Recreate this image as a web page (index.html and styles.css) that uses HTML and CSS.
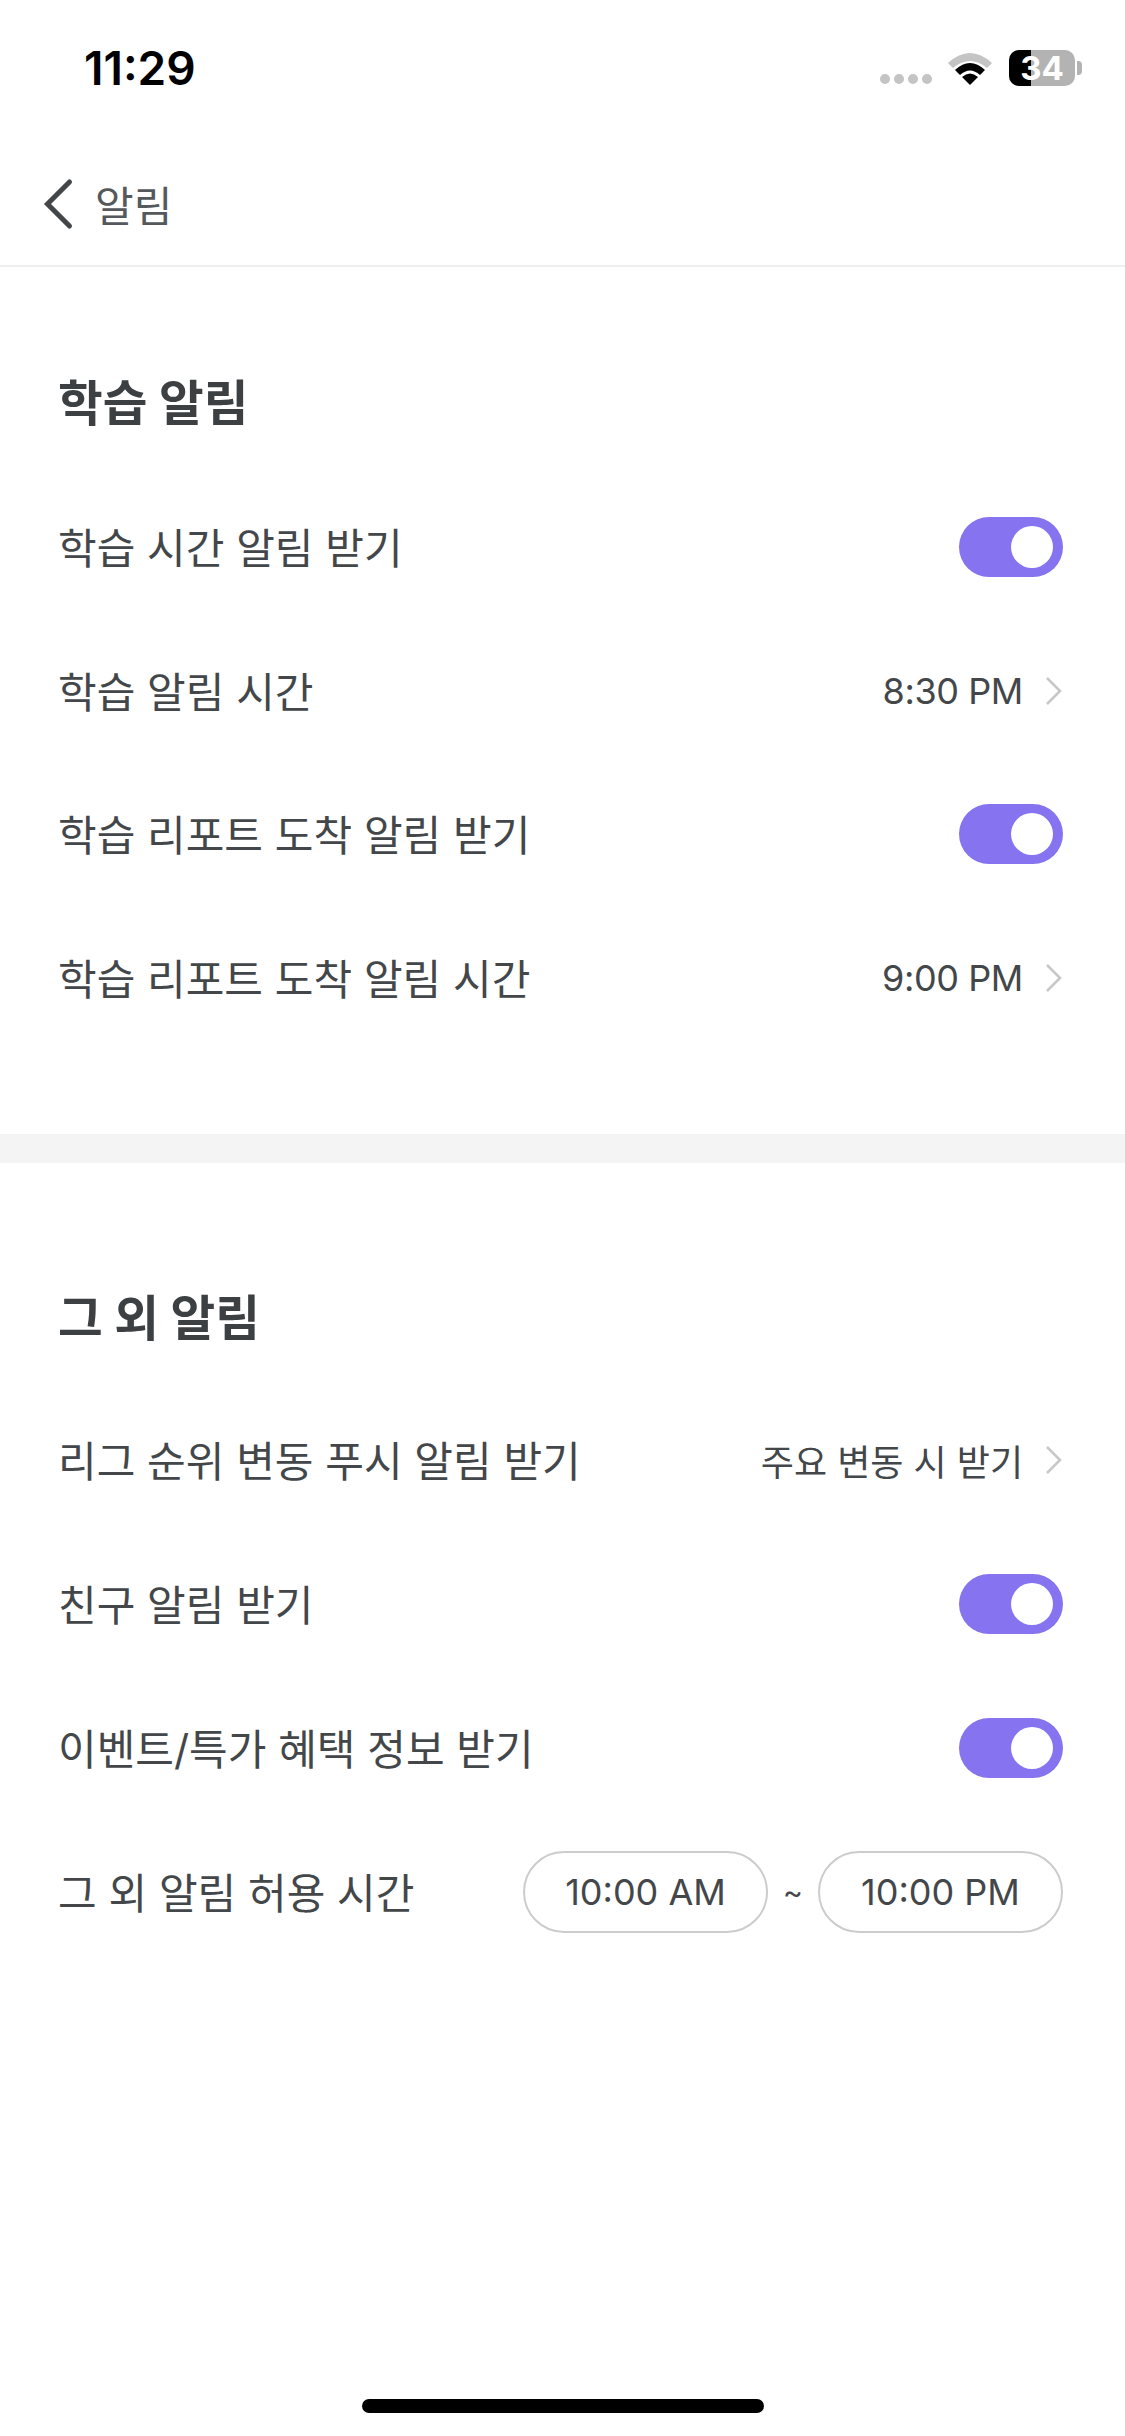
FILE: index.html
```html
<!DOCTYPE html>
<html lang="ko">
<head>
    <meta charset="UTF-8">
    <meta name="viewport" content="width=device-width, initial-scale=1.0">
    <title>알림</title>
    <link rel="stylesheet" href="styles.css">
</head>
<body>
<div class="page">
    <div class="status-bar">
        <span class="clock">11:29</span>
        <div class="status-icons">
            <div class="signal"><i></i><i></i><i></i><i></i></div>
            <svg class="wifi" width="46" height="34" viewBox="0 0 46 34">
                <path d="M1 12 Q23 -8 45 12 L40 17 Q23 3 6 17 Z" fill="#c4c4c4"/>
                <path d="M8 19 Q23 5 38 19 L33 24 Q23 15 13 24 Z" fill="#000"/>
                <path d="M15 26 Q23 19 31 26 L23 34 Z" fill="#000"/>
            </svg>
            <div class="battery">
                <div class="battery-body"><span class="battery-level"></span><span class="battery-text">34</span></div>
                <span class="battery-cap"></span>
            </div>
        </div>
    </div>

    <header class="nav">
        <svg class="back" width="34" height="54" viewBox="0 0 34 54">
            <path d="M27.5 5 L5.5 27 L27.5 49" fill="none" stroke="#43474a" stroke-width="5" stroke-linecap="round"/>
        </svg>
        <h1>알림</h1>
    </header>

    <section class="group first">
        <h2>학습 알림</h2>
        <div class="row"><span class="label">학습 시간 알림 받기</span><span class="toggle"></span></div>
        <div class="row">
            <span class="label">학습 알림 시간</span>
            <span class="value time">8:30 PM<svg class="chev" width="18" height="30" viewBox="0 0 18 30"><path d="M2 2 L15 15 L2 28" fill="none" stroke="#c8c8c8" stroke-width="2.6"/></svg></span>
        </div>
        <div class="row"><span class="label">학습 리포트 도착 알림 받기</span><span class="toggle"></span></div>
        <div class="row">
            <span class="label">학습 리포트 도착 알림 시간</span>
            <span class="value time">9:00 PM<svg class="chev" width="18" height="30" viewBox="0 0 18 30"><path d="M2 2 L15 15 L2 28" fill="none" stroke="#c8c8c8" stroke-width="2.6"/></svg></span>
        </div>
    </section>

    <div class="divider"></div>

    <section class="group second">
        <h2>그 외 알림</h2>
        <div class="row">
            <span class="label">리그 순위 변동 푸시 알림 받기</span>
            <span class="value">주요 변동 시 받기<svg class="chev" width="18" height="30" viewBox="0 0 18 30"><path d="M2 2 L15 15 L2 28" fill="none" stroke="#c8c8c8" stroke-width="2.6"/></svg></span>
        </div>
        <div class="row"><span class="label">친구 알림 받기</span><span class="toggle"></span></div>
        <div class="row"><span class="label">이벤트/특가 혜택 정보 받기</span><span class="toggle"></span></div>
        <div class="row">
            <span class="label">그 외 알림 허용 시간</span>
            <div class="range">
                <span class="pill">10:00 AM</span>
                <span class="tilde">~</span>
                <span class="pill">10:00 PM</span>
            </div>
        </div>
    </section>

    <div class="home-bar"></div>
</div>
</body>
</html>
```

FILE: styles.css
```css
/* General */
* {
    box-sizing: border-box;
}

body {
    margin: 0;
    background-color: #fff;
    font-family: "Inter", "Noto Sans CJK KR", sans-serif;
    color: #43474a;
}

.page {
    position: relative;
    width: 1125px;
    height: 2436px;
    overflow: hidden;
}

/* Status bar */
.status-bar {
    height: 136px;
    padding: 0 43px 0 84px;
    display: flex;
    align-items: center;
    justify-content: space-between;
}

.clock {
    font-size: 46px;
    font-weight: 600;
    color: #000;
}

.status-icons {
    display: flex;
    align-items: center;
}

.signal {
    display: flex;
    gap: 4px;
    margin: 22px 15px 0 0;
}

.signal i {
    width: 10px;
    height: 10px;
    border-radius: 50%;
    background-color: #c4c4c4;
}

.wifi {
    margin-right: 16px;
}

.battery {
    display: flex;
    align-items: center;
}

.battery-body {
    position: relative;
    width: 66px;
    height: 36px;
    border-radius: 10px;
    background-color: #b3b3b3;
    text-align: center;
}

.battery-level {
    position: absolute;
    left: 0;
    top: 0;
    width: 22px;
    height: 36px;
    border-radius: 10px 0 0 10px;
    background-color: #000;
}

.battery-text {
    position: relative;
    display: block;
    font-size: 33px;
    line-height: 36px;
    font-weight: 700;
    color: #fff;
}

.battery-cap {
    width: 5px;
    height: 14px;
    margin-left: 2px;
    border-radius: 0 4px 4px 0;
    background-color: #b3b3b3;
}

/* Nav */
.nav {
    height: 131px;
    padding: 6px 0 0 42px;
    display: flex;
    align-items: center;
    gap: 19px;
    border-bottom: 2px solid #eeeeee;
}

.nav h1 {
    margin: 0;
    font-size: 42px;
    font-weight: 400;
    color: #55595c;
}

/* Sections */
.group {
    padding: 0 62px 0 58px;
}

.group h2 {
    margin: 0;
    height: 120px;
    display: flex;
    align-items: center;
    font-size: 48.6px;
    font-weight: 700;
    color: #3c4043;
}

.group.first {
    padding-top: 73px;
    padding-bottom: 84px;
}

.group.first h2 {
    margin-bottom: 15px;
}

.group.second {
    padding-top: 92px;
}

.group.second h2 {
    margin-bottom: 13px;
}

.row {
    height: 143.7px;
    display: flex;
    align-items: center;
    justify-content: space-between;
}

.group.second .row {
    height: 144px;
}

.label {
    padding-bottom: 3px;
    font-size: 42px;
    color: #43474a;
}

.value {
    display: flex;
    align-items: center;
    font-size: 36px;
    color: #43474a;
}

.value.time {
    letter-spacing: -0.4px;
}

.chev {
    margin-left: 22px;
}

.divider {
    height: 29px;
    background-color: #f4f4f4;
}

/* Toggle */
.toggle {
    position: relative;
    width: 104px;
    height: 60px;
    border-radius: 30px;
    background-color: #8673ef;
}

.toggle::after {
    content: "";
    position: absolute;
    right: 10px;
    top: 9px;
    width: 42px;
    height: 42px;
    border-radius: 50%;
    background-color: #fff;
}

/* Time range */
.range {
    display: flex;
    align-items: center;
}

.pill {
    width: 245px;
    height: 82px;
    display: flex;
    align-items: center;
    justify-content: center;
    border: 2px solid #cccccc;
    border-radius: 41px;
    font-size: 36px;
    color: #43474a;
}

.tilde {
    width: 50px;
    text-align: center;
    font-size: 30px;
}

.home-bar {
    position: absolute;
    left: 362px;
    bottom: 23px;
    width: 402px;
    height: 14px;
    border-radius: 7px;
    background-color: #000;
}
```
